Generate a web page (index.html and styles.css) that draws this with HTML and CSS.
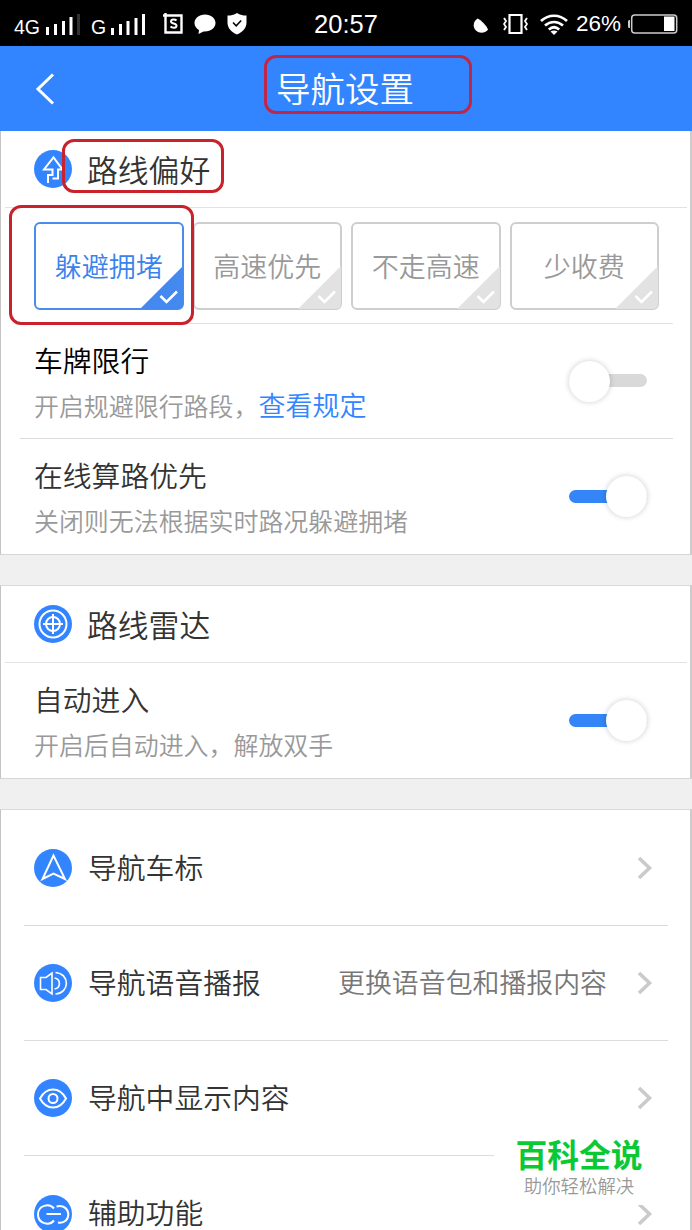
FILE: index.html
```html
<!DOCTYPE html>
<html lang="zh-CN">
<head>
  <meta charset="UTF-8" />
  <title>导航设置</title>
  <meta name="viewport" content="width=device-width, initial-scale=1" />
  <link rel="stylesheet" href="styles.css">
</head>
<body>

<div class="status-bar">
  <div class="status-left">
    <span class="net">4G</span>
    <svg class="signal" width="35" height="22" viewBox="0 0 35 22" fill="#fff">
      <path d="M0 13h3v8H0zM8 10h3v11H8zM16 7h3v14h-3zM23.500 3h3v18h-3z"/>
      <path d="M31 0h3v21h-3z" fill="#333"/>
    </svg>
    <span class="net net-2">G</span>
    <svg class="signal" width="35" height="22" viewBox="0 0 35 22" fill="#fff">
      <path d="M0 14h3v7H0zM8 10h3v11H8zM15.500 7h3v14h-3zM23.500 4h3v17h-3zM31 0h3v21h-3z"/>
    </svg>
    <svg class="app-icon" width="21" height="22" viewBox="0 0 21 22" fill="none" stroke="#fff" stroke-width="2.400">
      <path d="M0 2.500h18.500v17H2.500V0"/>
      <path d="M13.500 7.500c-1.500-1.500-5.500-1.500-5.500 1s5.500 1.500 5.500 4.200-4.500 2.300-6 .8" stroke-width="2"/>
    </svg>
    <svg class="chat-icon" width="22" height="21" viewBox="0 0 22 21" fill="#fff">
      <path d="M11 .5C5 .5.500 4.300.500 9c0 3 1.800 5.500 4.500 7l-.5 4 5-2.600c6.800.6 12-3.200 12-8.400C21.500 4.300 17 .5 11 .5z"/>
    </svg>
    <svg class="shield-icon" width="20" height="22" viewBox="0 0 20 22">
      <path d="M10 0c3 2 6 2.600 9.500 2.600v7C19.500 15 16 19 10 21.500 4 19 .5 15 .5 9.600v-7C4 2.600 7 2 10 0z" fill="#fff"/>
      <path d="M6 9.500l3.200 3.300 5-5.300" fill="none" stroke="#000" stroke-width="1.500"/>
    </svg>
  </div>
  <div class="time">20:57</div>
  <div class="status-right">
    <svg class="moon-icon" width="16" height="16" viewBox="0 0 16 16"><path d="M4.500.5C0 3.500-.5 9 3 12.500c3.500 3.300 9 2.800 12-.8C14 8 8 2 4.500.5z" fill="#fff"/></svg>
    <svg class="vibrate-icon" width="25" height="22" viewBox="0 0 25 22" fill="none" stroke="#fff">
      <path d="M6.500 2h12v18h-12z" stroke-width="2.200"/>
      <path d="M1 5l2 3-2 3 2 3-2 3M24 5l-2 3 2 3-2 3 2 3" stroke-width="1.800"/>
    </svg>
    <svg class="wifi-icon" width="28" height="21" viewBox="0 0 28 21" fill="none" stroke="#fff" stroke-width="2.700">
      <path d="M1 7c7.500-7 18.500-7 26 0M5 11.500c5.500-4.700 12.500-4.700 18 0M8.800 15.500c3.200-2.800 7.200-2.800 10.400 0"/>
      <path d="M10.500 17.500c2-1.500 5-1.500 7 0L14 21z" fill="#fff" stroke="none"/>
    </svg>
    <span class="percent">26%</span>
    <svg class="battery" width="50" height="20" viewBox="0 0 50 20">
      <rect x="3.700" y="1" width="45" height="18" rx="3" fill="none" stroke="#ccc" stroke-width="1.500"/>
      <path d="M0 7.500c0-1 .5-1.500 2-1.500v8c-1.500 0-2-.5-2-1.500z" fill="#ccc"/>
      <path d="M36 2.500h10.500v14.500H36z" fill="#fff"/>
    </svg>
  </div>
</div>

<header class="nav-bar">
  <svg class="back" width="20" height="34" viewBox="0 0 20 34" fill="none" stroke="#fff" stroke-width="3">
    <path d="M18 2.500L3 17l15 14.500"/>
  </svg>
  <h1 class="nav-title">导航设置<span class="mark mark-title"></span></h1>
</header>

<section class="card">
  <div class="card-head">
    <svg class="icon" viewBox="0 0 38 38">
      <circle cx="19" cy="19" r="19"/>
      <path class="line" d="M14 33v-8h4.500v-5.500H10L19.500 7.500l9 12H24v9h-5.500"/>
    </svg>
    <h2>路线偏好</h2>
    <span class="mark mark-head"></span>
  </div>
  <div class="options">
    <div class="option active">躲避拥堵
      <svg class="corner" viewBox="0 0 43 43"><path d="M43 0v43H0z"/><path class="tick" d="M20.500 30l6 6L37 25.500"/></svg>
      <span class="mark mark-option"></span>
    </div>
    <div class="option">高速优先
      <svg class="corner" viewBox="0 0 43 43"><path d="M43 0v43H0z"/><path class="tick" d="M20.500 30l6 6L37 25.500"/></svg>
    </div>
    <div class="option">不走高速
      <svg class="corner" viewBox="0 0 43 43"><path d="M43 0v43H0z"/><path class="tick" d="M20.500 30l6 6L37 25.500"/></svg>
    </div>
    <div class="option">少收费
      <svg class="corner" viewBox="0 0 43 43"><path d="M43 0v43H0z"/><path class="tick" d="M20.500 30l6 6L37 25.500"/></svg>
    </div>
  </div>
  <div class="setting bordered">
    <div class="setting-text">
      <h3 class="dark">车牌限行</h3>
      <p>开启规避限行路段，<a class="link">查看规定</a></p>
    </div>
    <div class="switch"><span class="knob"></span></div>
  </div>
  <div class="setting">
    <div class="setting-text">
      <h3>在线算路优先</h3>
      <p>关闭则无法根据实时路况躲避拥堵</p>
    </div>
    <div class="switch on"><span class="knob"></span></div>
  </div>
</section>

<section class="card">
  <div class="card-head">
    <svg class="icon" viewBox="0 0 38 38">
      <circle cx="19" cy="19" r="19"/>
      <circle class="line" cx="19" cy="19" r="13.500"/>
      <circle class="line" cx="19" cy="19" r="7"/>
      <path class="line" d="M19 9v20M9 19h20"/>
    </svg>
    <h2>路线雷达</h2>
  </div>
  <div class="setting">
    <div class="setting-text">
      <h3>自动进入</h3>
      <p>开启后自动进入，解放双手</p>
    </div>
    <div class="switch on"><span class="knob"></span></div>
  </div>
</section>

<section class="card menu">
  <div class="menu-item">
    <svg class="icon" viewBox="0 0 38 38">
      <circle cx="19" cy="19" r="19"/>
      <path class="line" d="M19.500 6.500L8.500 30l11-5.500 11.500 5.500z"/>
    </svg>
    <span class="menu-name">导航车标</span>
    <svg class="arrow" viewBox="0 0 16 24"><path d="M2 2l10.500 10L2 22"/></svg>
  </div>
  <div class="menu-item">
    <svg class="icon" viewBox="0 0 38 38">
      <circle cx="19" cy="19" r="19"/>
      <path class="line thin" d="M6.500 13.500H12l6-4.500v21l-6-4.500H6.500zM20.500 14c6.500 1 6.500 10 0 11M21.500 8.500c14.500 1 14.500 20.500 0 21.500"/>
    </svg>
    <span class="menu-name">导航语音播报</span>
    <span class="hint">更换语音包和播报内容</span>
    <svg class="arrow" viewBox="0 0 16 24"><path d="M2 2l10.500 10L2 22"/></svg>
  </div>
  <div class="menu-item">
    <svg class="icon" viewBox="0 0 38 38">
      <circle cx="19" cy="19" r="19"/>
      <path class="line" d="M6 19.500c6.500-12 19.500-12 26 0-6.500 12-19.500 12-26 0z"/>
      <circle class="line" cx="19" cy="19.500" r="4.500"/>
    </svg>
    <span class="menu-name">导航中显示内容</span>
    <svg class="arrow" viewBox="0 0 16 24"><path d="M2 2l10.500 10L2 22"/></svg>
  </div>
  <div class="menu-item last">
    <svg class="icon" viewBox="0 0 38 38">
      <circle cx="19" cy="19" r="19"/>
      <path class="line" d="M20 13.500C15.500 8 4 10 4 19.500S15.500 31 20 25.500M12.500 19H27M22.500 11.500C38 8 38 30 24 27.500"/>
    </svg>
    <span class="menu-name">辅助功能</span>
    <svg class="arrow" viewBox="0 0 16 24"><path d="M2 2l10.500 10L2 22"/></svg>
  </div>
</section>

<div class="watermark">
  <div class="wm-name">百科全说</div>
  <div class="wm-slogan">助你轻松解决</div>
</div>

</body>
</html>
```

FILE: styles.css
```css
* {
  box-sizing: border-box;
}
body {
  margin: 0;
  position: relative;
  height: 1230px;
  overflow: hidden;
  background: #f0f0f0;
  color: #333;
  font-family: "Noto Sans CJK SC", sans-serif;
  font-weight: 350;
}
h1, h2, h3, p {
  margin: 0;
  font-weight: inherit;
}
svg {
  display: block;
  flex-shrink: 0;
}

/* 状态栏 */
.status-bar {
  display: grid;
  grid-template-columns: 300px 92px 300px;
  height: 46px;
  background: #000;
  color: #fff;
  font-family: "Liberation Sans", Arial, sans-serif;
  font-weight: 400;
}
.status-left,
.status-right {
  display: flex;
  align-items: center;
}
.status-left {
  padding-left: 14px;
}
.status-right {
  justify-content: flex-end;
  padding-right: 14px;
}
.net {
  width: 32px;
  font-size: 19.5px;
  padding-top: 6px;
}
.net-2 {
  width: 20px;
  margin-left: 10px;
}
.signal {
  margin-top: 1px;
}
.app-icon {
  margin-left: 17px;
}
.chat-icon {
  margin-left: 10px;
}
.shield-icon {
  margin-left: 11px;
}
.time {
  font-size: 25.5px;
  line-height: 48px;
  text-align: center;
}
.moon-icon {
  margin-top: 3px;
}
.vibrate-icon {
  margin-left: 14px;
}
.wifi-icon {
  margin-left: 12px;
}
.percent {
  margin-left: 8px;
  font-size: 22.5px;
  line-height: 48px;
}
.battery {
  margin-left: 7px;
}

/* 顶部导航 */
.nav-bar {
  display: flex;
  align-items: center;
  height: 85px;
  padding-left: 35px;
  background: #3385ff;
  color: #fff;
}
.nav-title {
  position: relative;
  margin-left: 221px;
  padding-bottom: 4px;
  font-size: 34.5px;
  line-height: 50px;
}

/* 红色标注框 */
.mark {
  position: absolute;
  border: 3px solid #c8232c;
  border-radius: 12px;
  pointer-events: none;
}
.mark-title {
  left: -12px;
  top: -7px;
  width: 208px;
  height: 59px;
  border-color: #bf2746;
}
.mark-head {
  left: 57px;
  top: 8px;
  width: 162px;
  height: 54px;
}
.mark-option {
  left: -27px;
  top: -19px;
  width: 185px;
  height: 120px;
  z-index: 1;
}

/* 卡片 */
.card {
  margin-bottom: 31px;
  background: #fff;
  border: 1px solid #d6d6d6;
  border-top: 0;
  border-left-color: #c4c4c4;
  border-right: 2px solid #ccc;
}
.card + .card {
  margin-top: -1px;
  border-top: 1px solid #d9d9d9;
}
.card-head {
  position: relative;
  display: flex;
  align-items: center;
  height: 77px;
  margin: 0 3px 0 4px;
  padding-left: 29px;
  border-bottom: 1px solid #e2e2e2;
}
.card-head h2 {
  margin-left: 15px;
  font-size: 30.8px;
  line-height: 46px;
}
.icon {
  width: 38px;
  height: 38px;
  fill: #3385ff;
}
.icon .line {
  fill: none;
  stroke: #fff;
  stroke-width: 2;
}
.icon .thin {
  stroke-width: 1.6;
}

/* 偏好选项 */
.options {
  display: grid;
  grid-template-columns: repeat(4, 1fr);
  gap: 9px;
  margin: 0 17px 0 19px;
  padding: 14px 14px 15px 14px;
  height: 116px;
  border-bottom: 1px solid #e2e2e2;
}
.option {
  position: relative;
  border: 2px solid #cecece;
  border-radius: 6px;
  color: #999;
  font-size: 27px;
  line-height: 84px;
  text-align: center;
}
.option.active {
  border-color: #4a8ceb;
  color: #3a82ee;
}
.corner {
  position: absolute;
  right: -1px;
  bottom: -1px;
  width: 43px;
  height: 43px;
  border-bottom-right-radius: 5px;
  fill: #e2e2e2;
}
.active .corner {
  fill: #4389f0;
}
.corner .tick {
  fill: none;
  stroke: #fff;
  stroke-width: 2.6;
}

/* 开关设置 */
.setting {
  display: flex;
  align-items: center;
  justify-content: space-between;
  height: 115px;
  margin: 0 17px 0 19px;
  padding: 0 26px 0 14px;
}
.setting.bordered {
  border-bottom: 1px solid #dcdcdc;
}
.setting-text {
  padding-top: 3px;
}
.setting h3 {
  font-size: 28.8px;
  line-height: 44px;
}
.setting h3.dark {
  color: #000;
}
.setting p {
  color: #999;
  font-size: 24.95px;
  line-height: 46px;
}
.link {
  color: #3385ff;
  font-size: 27px;
}
.switch {
  position: relative;
  display: flex;
  align-items: center;
  width: 78px;
  height: 42px;
}
.switch::before {
  content: "";
  position: absolute;
  left: 0;
  right: 0;
  top: 14px;
  height: 13px;
  border-radius: 7px;
  background: #d9d9d9;
}
.switch.on::before {
  background: #3385f8;
}
.switch.on {
  justify-content: flex-end;
}
.knob {
  position: relative;
  width: 41px;
  height: 41px;
  border-radius: 50%;
  background: #fff;
  box-shadow: 0 0 5px 1px rgba(0, 0, 0, 0.15);
}

/* 菜单 */
.menu {
  height: 424px;
  margin-bottom: 0;
  padding: 1px 22px 0 23px;
  overflow: hidden;
}
.menu-item {
  display: flex;
  align-items: center;
  height: 115px;
  padding: 0 15px 0 10px;
  border-bottom: 1px solid #dcdcdc;
}
.menu-item.last {
  border-bottom: 0;
}
.menu-name {
  flex: 1;
  margin: -4px 0 0 16px;
  font-size: 28.8px;
}
.hint {
  margin-top: -4px;
  color: #777;
  font-size: 26.9px;
}
.arrow {
  width: 16px;
  height: 24px;
  margin-left: 30px;
  fill: none;
  stroke: #cacaca;
  stroke-width: 3.6;
}

/* 右下角水印 */
.watermark {
  position: absolute;
  left: 494px;
  top: 1132px;
  width: 174px;
  height: 73px;
  background: #fff;
  text-align: center;
}
.wm-name {
  margin-left: -4px;
  color: #0bc934;
  font-size: 31.8px;
  font-weight: 700;
  line-height: 43px;
}
.wm-slogan {
  margin-left: -4px;
  color: #999;
  font-size: 18.4px;
  font-weight: 350;
  line-height: 20px;
}
```
